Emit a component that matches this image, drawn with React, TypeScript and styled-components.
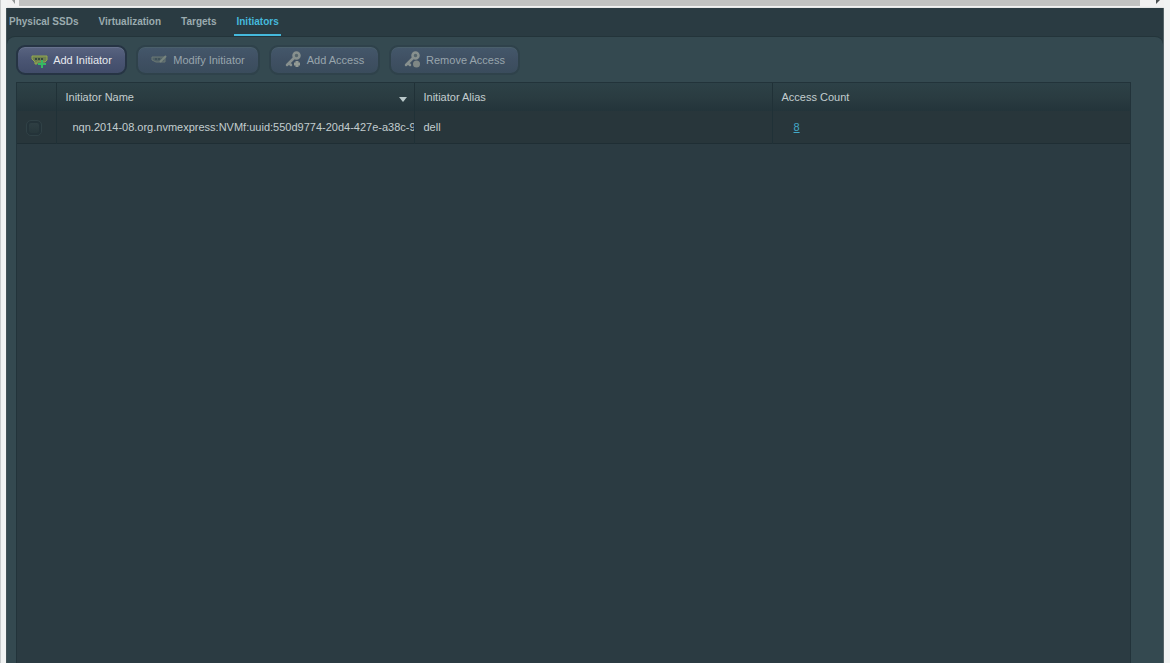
import React, { useState } from "react";
import styled, { createGlobalStyle } from "styled-components";

const GlobalStyle = createGlobalStyle`
  *, *::before, *::after { box-sizing: border-box; }
  html, body { margin: 0; }
  body {
    background: #f1f3f3;
    color: #c3cdcf;
    font-family: "Liberation Sans", Arial, sans-serif;
    font-size: 11px;
    line-height: 14px;
    overflow: hidden;
  }
`;

const Frame = styled.div`
  display: flex;
  flex-direction: column;
  min-height: 100vh;
  padding: 0 6px;
  border-left: 1px solid #c9cccd;
`;

const ScrollTrack = styled.div`
  display: flex;
  height: 8px;
  background: #f1f1f1;
  border-bottom: 1px solid #e4e6e6;
`;

const ScrollEnd = styled.div<{ $wide?: boolean }>`
  display: flex;
  align-items: flex-start;
  justify-content: ${(p) => (p.$wide ? "flex-end" : "center")};
  width: ${(p) => (p.$wide ? 24 : 12)}px;
  padding-right: ${(p) => (p.$wide ? 4 : 0)}px;
`;

const ScrollThumb = styled.div`
  flex: 1;
  height: 6px;
  background: #c1c2c1;
`;

const Shell = styled.div`
  display: flex;
  flex: 1;
  flex-direction: column;
  margin-left: -1px;
  background: #2a3b42;
  border-left: 1px solid #435257;
  border-right: 1px solid #566468;
`;

const Tabs = styled.nav`
  display: flex;
  gap: 16px;
  height: 28px;
`;

const Tab = styled.a<{ $active?: boolean }>`
  height: 28px;
  padding: 7px 2px 0;
  border-bottom: 2px solid ${(p) => (p.$active ? "#45b9dc" : "transparent")};
  color: ${(p) => (p.$active ? "#45b9dc" : "#9babaf")};
  font-size: 10px;
  font-weight: bold;
  text-decoration: none;
  white-space: nowrap;
`;

const Panel = styled.main`
  display: flex;
  flex: 1;
  flex-direction: column;
  padding: 8px 32px 0 9px;
  background: #344950;
  border-top: 1px solid #23343a;
  border-radius: 8px 8px 0 0;
`;

const Toolbar = styled.div`
  display: flex;
  gap: 9px;
  margin-bottom: 7px;
`;

const ToolButton = styled.button<{ $width: number }>`
  display: flex;
  align-items: center;
  justify-content: center;
  gap: 5px;
  width: ${(p) => p.$width}px;
  height: 30px;
  padding: 0 0 1px;
  border: 2px solid #263444;
  border-radius: 9px;
  background: linear-gradient(#596480, #4b5674 45%, #414c69);
  background-clip: padding-box;
  box-shadow: inset 0 1px 0 #66718c;
  color: #e6e9ee;
  font: inherit;
  white-space: nowrap;

  &:disabled {
    border-color: #2f424b;
    background: linear-gradient(#44576a, #3f5063 50%, #3a4c5c);
    background-clip: padding-box;
    box-shadow: inset 0 1px 0 #4a5f6b;
    color: #98a5ac;
  }
`;

const Grid = styled.div`
  flex: 1;
  border: 1px solid #22333a;
  border-bottom: 0;
  background: #2b3b42;
`;

const Table = styled.table`
  width: 100%;
  border-collapse: collapse;
  table-layout: fixed;
`;

const CheckCol = styled.col`
  width: 39px;
`;

const HeadRow = styled.tr`
  height: 28px;
  background: linear-gradient(#2d4147, #2a3c41 50%, #23343a);
`;

const BodyRow = styled.tr`
  height: 32px;
  background: #28363b;
  border-bottom: 1px solid #1f2e34;
`;

const HeadCell = styled.th`
  padding: 0 7px 0 9px;
  border-left: 1px solid #203137;
  border-right: 1px solid #203137;
  font-weight: normal;
  text-align: left;

  &:first-child { border-left: 0; }
  &:last-child { border-right: 0; }
`;

const HeadContent = styled.div`
  display: flex;
  align-items: center;
  justify-content: space-between;

  svg { margin-top: 4px; }
`;

const Cell = styled.td<{ $indent?: number }>`
  padding: 0 0 0 ${(p) => p.$indent ?? 9}px;
  border-left: 1px solid #203137;
  border-right: 1px solid #203137;
  overflow: hidden;
  white-space: nowrap;

  &:first-child { border-left: 0; }
  &:last-child { border-right: 0; }
`;

const Check = styled.input`
  display: block;
  width: 16px;
  height: 16px;
  margin: 2px 0 0;
  border: 1px solid #304146;
  border-radius: 5px;
  appearance: none;
  background: linear-gradient(#304045, #26363a);
  box-shadow: inset 0 0 0 2px #243339;

  &:checked { background: #45b9dc; }
`;

const CountLink = styled.a`
  color: #43a9c8;
`;

const DriveIcon = ({ variant }: { variant: "add" | "edit" }) =>
  variant === "add" ? (
    <svg width="17" height="16" viewBox="0 0 17 16" aria-hidden="true">
      <path d="M1 4h15v4l-2 2H6v2H4v-2L1 7z" fill="#6e8150" stroke="#94aa4c" />
      <path d="M4 7h9" stroke="#34483f" strokeWidth="2" strokeDasharray="2 1" />
      <path d="M11 8v8M7 12h8" stroke="#35b962" strokeWidth="2" />
    </svg>
  ) : (
    <svg width="17" height="16" viewBox="0 0 17 16" aria-hidden="true">
      <path d="M1 5h13v5H5L1 8z" fill="#506167" stroke="#6a7974" />
      <path d="M4 7h5" stroke="#3f5159" strokeWidth="2" strokeDasharray="2 1" />
      <path d="M9 10l6-6" stroke="#78857e" strokeWidth="2" />
    </svg>
  );

const KeyIcon = ({ variant }: { variant: "add" | "remove" }) => (
  <svg width="17" height="17" viewBox="0 0 17 17" aria-hidden="true">
    <circle cx="11.5" cy="4.5" r="3" fill="#55656c" stroke="#87908e" strokeWidth="2.5" />
    <path d="M9 7l-7 7M4 12l2 2" stroke="#87908e" strokeWidth="2.5" strokeLinecap="round" />
    {variant === "add" ? (
      <path d="M12 10v6M9 13h6" stroke="#929a94" strokeWidth="3" />
    ) : (
      <circle cx="12.5" cy="13" r="3.5" fill="#7e8785" />
    )}
  </svg>
);

const SortIcon = () => (
  <svg width="8" height="5" viewBox="0 0 8 5" aria-hidden="true">
    <path d="M0 0h8L4 5z" fill="#b9c8ca" />
  </svg>
);

const initiators = [
  {
    name: "nqn.2014-08.org.nvmexpress:NVMf:uuid:550d9774-20d4-427e-a38c-9a",
    alias: "dell",
    count: 8,
  },
];

export default function App() {
  const [selected, setSelected] = useState(false);
  return (
    <>
      <GlobalStyle />
      <Frame>
        <ScrollTrack>
          <ScrollEnd>
            <svg width="4" height="5" viewBox="0 0 4 5" aria-hidden="true">
              <path d="M4 0v4L1 0z" fill="#929696" />
            </svg>
          </ScrollEnd>
          <ScrollThumb />
          <ScrollEnd $wide>
            <svg width="4" height="5" viewBox="0 0 4 5" aria-hidden="true">
              <path d="M0 0v4l4-4z" fill="#4b5052" />
            </svg>
          </ScrollEnd>
        </ScrollTrack>
        <Shell>
          <Tabs>
            <Tab href="#ssds">Physical SSDs</Tab>
            <Tab href="#virtualization">Virtualization</Tab>
            <Tab href="#targets">Targets</Tab>
            <Tab href="#initiators" $active aria-current="page">
              Initiators
            </Tab>
          </Tabs>
          <Panel>
            <Toolbar>
              <ToolButton $width={111}>
                <DriveIcon variant="add" />
                Add Initiator
              </ToolButton>
              <ToolButton $width={124} disabled>
                <DriveIcon variant="edit" />
                Modify Initiator
              </ToolButton>
              <ToolButton $width={111} disabled>
                <KeyIcon variant="add" />
                Add Access
              </ToolButton>
              <ToolButton $width={131} disabled>
                <KeyIcon variant="remove" />
                Remove Access
              </ToolButton>
            </Toolbar>
            <Grid>
              <Table>
                <colgroup>
                  <CheckCol />
                  <col />
                  <col />
                  <col />
                </colgroup>
                <thead>
                  <HeadRow>
                    <HeadCell aria-label="Select" />
                    <HeadCell aria-sort="descending">
                      <HeadContent>
                        Initiator Name
                        <SortIcon />
                      </HeadContent>
                    </HeadCell>
                    <HeadCell>Initiator Alias</HeadCell>
                    <HeadCell>Access Count</HeadCell>
                  </HeadRow>
                </thead>
                <tbody>
                  {initiators.map((item) => (
                    <BodyRow key={item.name}>
                      <Cell>
                        <Check
                          type="checkbox"
                          aria-label={`Select ${item.alias}`}
                          checked={selected}
                          onChange={(e) => setSelected(e.target.checked)}
                        />
                      </Cell>
                      <Cell $indent={16}>{item.name}</Cell>
                      <Cell>{item.alias}</Cell>
                      <Cell $indent={21}>
                        <CountLink href="#access">{item.count}</CountLink>
                      </Cell>
                    </BodyRow>
                  ))}
                </tbody>
              </Table>
            </Grid>
          </Panel>
        </Shell>
      </Frame>
    </>
  );
}
